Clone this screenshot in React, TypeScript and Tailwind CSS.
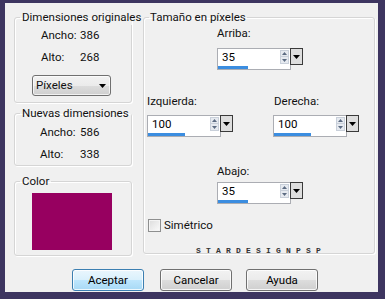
import React from "react";

function Spin({ value, barClass }: { value: string; barClass: string }) {
  return (
    <div className="flex items-start">
      <div className="w-[74px] h-[22px] border border-[#abadb3] bg-white flex flex-col">
        <div className="flex h-[16px]">
          <span className="flex-1 pl-[4px] leading-[17px] text-black">{value}</span>
          <div className="w-[9px] flex flex-col mt-[1px] mr-[1px]">
            <div className="h-[7px] bg-[#e6eaf0] border border-[#c9d0da] flex items-center justify-center">
              <svg width="5" height="3" viewBox="0 0 5 3"><path d="M2.5 0 L5 3 L0 3 Z" fill="#5c6b82" /></svg>
            </div>
            <div className="h-[7px] bg-[#e6eaf0] border border-[#c9d0da] border-t-0 flex items-center justify-center">
              <svg width="5" height="3" viewBox="0 0 5 3"><path d="M0 0 L5 0 L2.5 3 Z" fill="#5c6b82" /></svg>
            </div>
          </div>
        </div>
        <div className={"mt-[1px] h-[3px] bg-[#3b8de0] " + barClass} />
      </div>
      <div className="w-[13px] h-[17px] border border-[#3a3a3a] bg-[#dedede] flex items-center justify-center -ml-[1px]">
        <svg width="7" height="4" viewBox="0 0 7 4"><path d="M0 0 L7 0 L3.5 4 Z" fill="#000" /></svg>
      </div>
    </div>
  );
}

function Btn({ label, primary }: { label: string; primary?: boolean }) {
  return (
    <div
      className={
        "w-[72px] h-[22px] rounded-[3px] border flex items-center justify-center text-black shadow-[inset_0_0_0_1px_rgba(255,255,255,0.8)] " +
        (primary
          ? "border-[#3c7fb1] bg-[linear-gradient(#eaf6fd_0%,#d9f0fc_50%,#bee6fd_51%,#a7d9f5_100%)]"
          : "border-[#707070] bg-[linear-gradient(#f2f2f2_0%,#ebebeb_50%,#dddddd_51%,#cfcfcf_100%)]")
      }
    >
      {label}
    </div>
  );
}

const group =
  "border border-[#d5d5d5] rounded-[3px] shadow-[inset_1px_1px_0_#ffffff,1px_1px_0_#ffffff] min-w-0";

export default function App() {
  return (
    <div className="w-[385px] h-[299px] overflow-hidden bg-[#3d3560] pt-[3px] pl-[5px] font-['Roboto','Noto_Sans',sans-serif] text-[11.5px] text-[#111] leading-[15px]">
      <div className="w-[373px] h-[289px] bg-[#f0f0f0] flex flex-col">
        <div className="flex pt-[7px] pl-[9px] gap-[11px]">
          {/* Left column */}
          <div className="w-[118px] flex flex-col">
            <fieldset className={group + " pb-[6px]"}>
              <legend className="ml-[5px] px-[2px] whitespace-nowrap">Dimensiones originales</legend>
              <div className="grid grid-cols-[39px_1fr] pl-[26px] mt-[3px] gap-y-[7px]">
                <span>Ancho:</span>
                <span>386</span>
                <span>Alto:</span>
                <span>268</span>
              </div>
              <div className="ml-[17px] mt-[10px] w-[79px] h-[21px] border border-[#707070] rounded-[3px] bg-[linear-gradient(#f2f2f2_0%,#ebebeb_50%,#dddddd_51%,#cfcfcf_100%)] flex items-center justify-between pl-[3px] pr-[4px] shadow-[inset_0_0_0_1px_rgba(255,255,255,0.7)]">
                <span>Píxeles</span>
                <svg width="7" height="4" viewBox="0 0 7 4"><path d="M0 0 L7 0 L3.5 4 Z" fill="#000" /></svg>
              </div>
            </fieldset>
            <fieldset className={group + " mt-[3px] pb-[3px]"}>
              <legend className="ml-[5px] px-[2px] whitespace-nowrap">Nuevas dimensiones</legend>
              <div className="grid grid-cols-[40px_1fr] pl-[25px] mt-[4px] gap-y-[7px]">
                <span>Ancho:</span>
                <span>586</span>
                <span>Alto:</span>
                <span>338</span>
              </div>
            </fieldset>
            <fieldset className={group + " mt-[8px] pb-[5px]"}>
              <legend className="ml-[5px] px-[2px] whitespace-nowrap">Color</legend>
              <div className="ml-[17px] mt-[4px] w-[80px] h-[57px] bg-[#970060]" />
            </fieldset>
          </div>
          {/* Right group */}
          <fieldset className={group + " w-[232px] h-[244px] flex flex-col"}>
            <legend className="ml-[5px] px-[1px] whitespace-nowrap">Tamaño en píxeles</legend>
            <div className="pl-[73px] mt-[1px]">
              <div>Arriba:</div>
              <div className="mt-[7px]">
                <Spin value="35" barClass="w-[30px]" />
              </div>
            </div>
            <div className="flex pl-[3px] mt-[24px]">
              <div className="w-[126px]">
                <div>Izquierda:</div>
                <div className="mt-[6px]">
                  <Spin value="100" barClass="w-[37px]" />
                </div>
              </div>
              <div>
                <div className="pl-[1px]">Derecha:</div>
                <div className="mt-[6px]">
                  <Spin value="100" barClass="w-[37px]" />
                </div>
              </div>
            </div>
            <div className="pl-[73px] mt-[27px]">
              <div>Abajo:</div>
              <div className="mt-[3px]">
                <Spin value="35" barClass="w-[30px]" />
              </div>
            </div>
            <div className="flex items-center pl-[4px] mt-[14px] gap-[3px]">
              <div className="w-[13px] h-[13px] border border-[#8e8f8f] bg-[linear-gradient(135deg,#dcdcdc,#fbfbfb)] shadow-[inset_0_0_0_1px_#f4f4f4]" />
              <span>Simétrico</span>
            </div>
            <div className="mt-[13px] flex justify-center pl-[4px]">
              <span className="font-['Liberation_Mono',monospace] font-bold text-[8px] leading-[9px] tracking-[5.2px] text-[#333]">STARDESIGNPSP</span>
            </div>
          </fieldset>
        </div>
        <div className="flex pl-[67px] mt-[13px] gap-[16px]">
          <Btn label="Aceptar" primary />
          <Btn label="Cancelar" />
          <div className="-ml-[2px]">
            <Btn label="Ayuda" />
          </div>
        </div>
      </div>
    </div>
  );
}
